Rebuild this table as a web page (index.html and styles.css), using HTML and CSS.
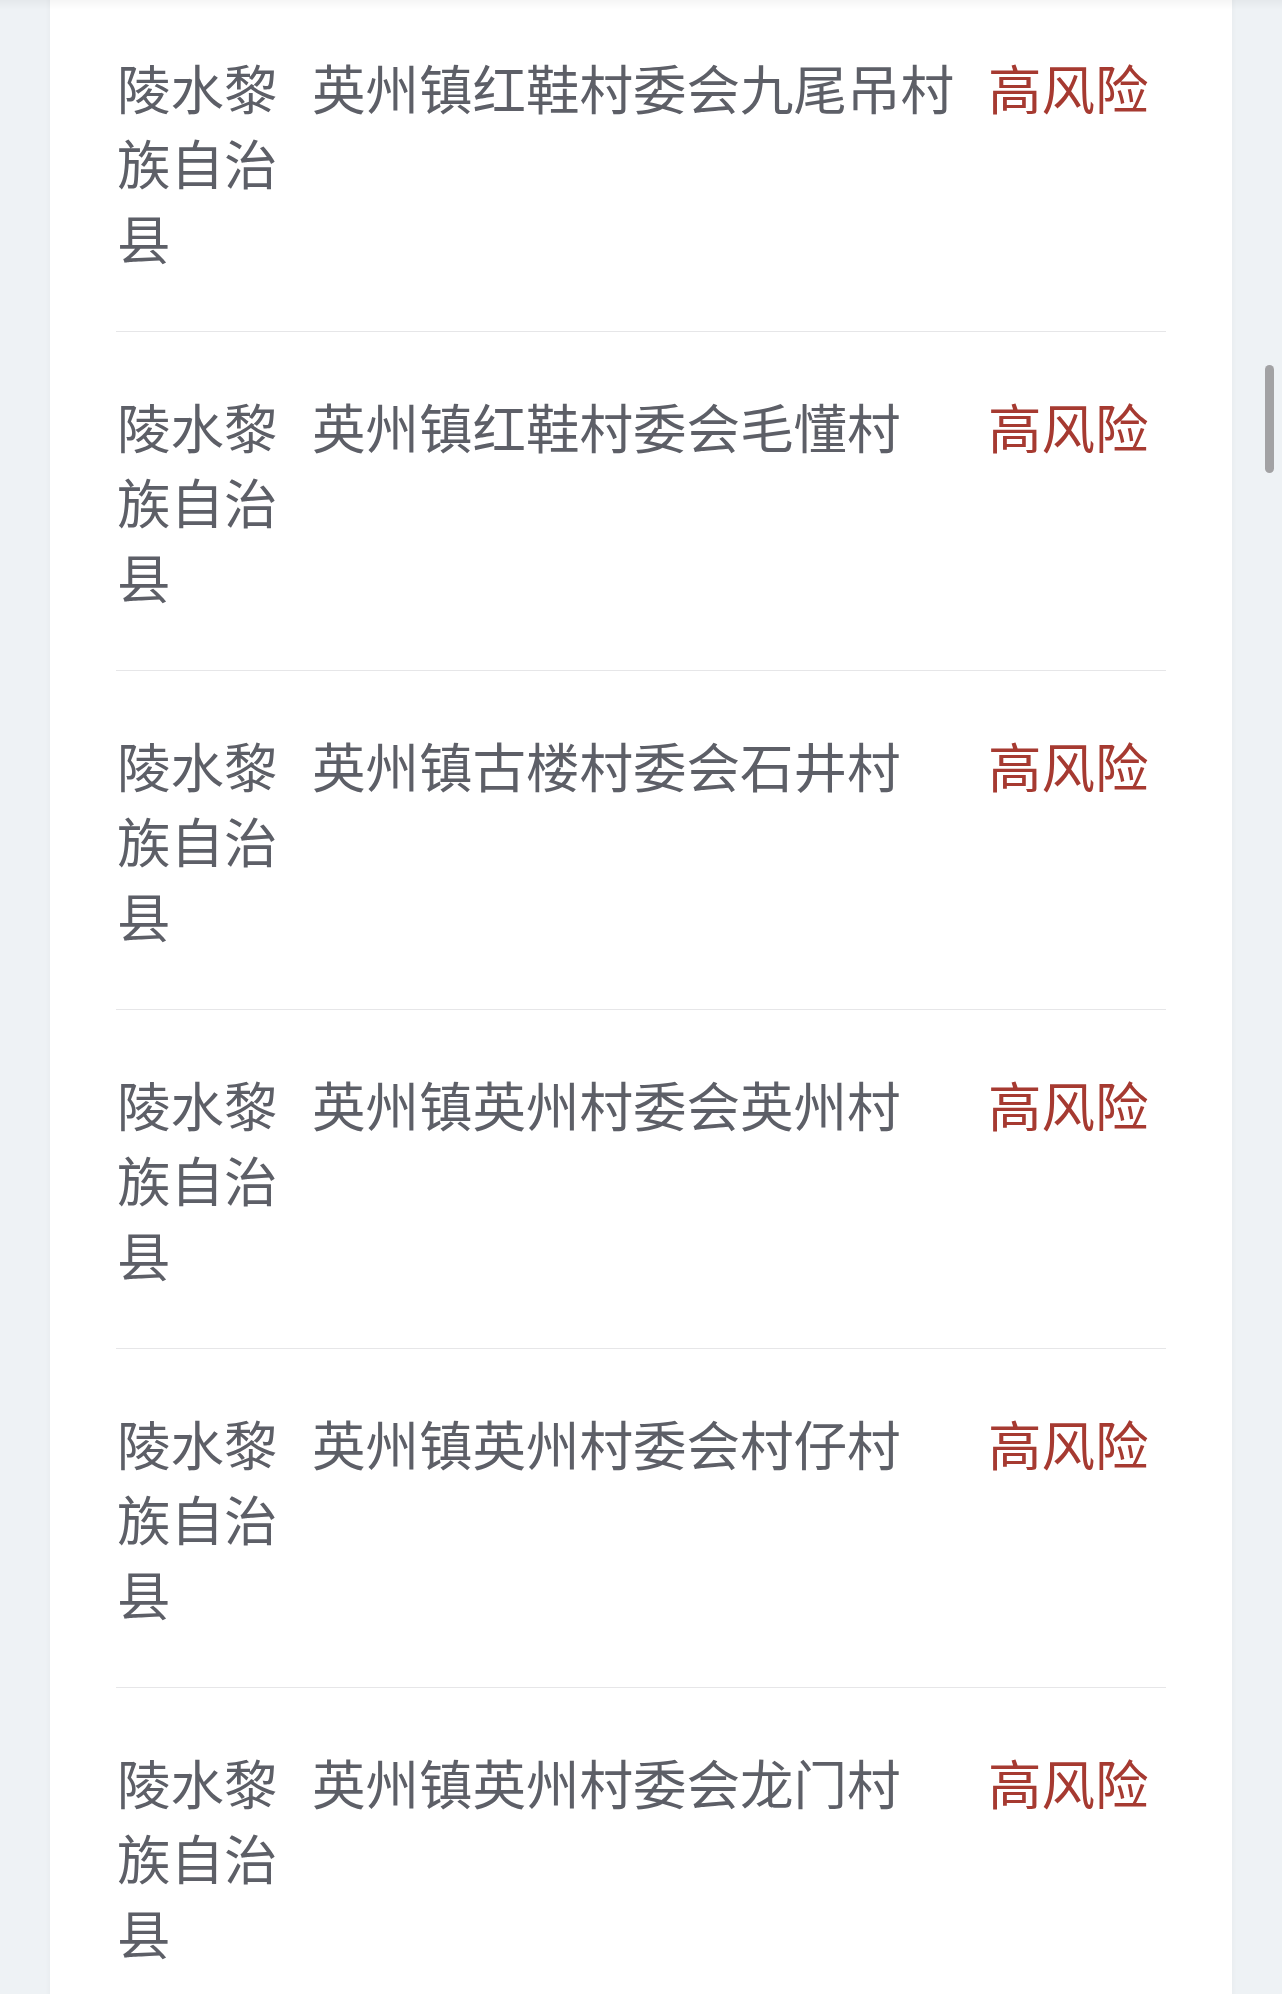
FILE: index.html
```html
<!DOCTYPE html>
<html lang="zh-CN">
<head>
<meta charset="utf-8">
<title>风险地区</title>
<link rel="stylesheet" href="styles.css">
</head>
<body>
<div class="top-shade"></div>
<main class="card">
  <ul class="list">
    <li class="row"><span class="county">陵水黎族自治县</span><span class="place">英州镇红鞋村委会九尾吊村</span><span class="level">高风险</span></li>
    <li class="row"><span class="county">陵水黎族自治县</span><span class="place">英州镇红鞋村委会毛懂村</span><span class="level">高风险</span></li>
    <li class="row"><span class="county">陵水黎族自治县</span><span class="place">英州镇古楼村委会石井村</span><span class="level">高风险</span></li>
    <li class="row"><span class="county">陵水黎族自治县</span><span class="place">英州镇英州村委会英州村</span><span class="level">高风险</span></li>
    <li class="row"><span class="county">陵水黎族自治县</span><span class="place">英州镇英州村委会村仔村</span><span class="level">高风险</span></li>
    <li class="row"><span class="county">陵水黎族自治县</span><span class="place">英州镇英州村委会龙门村</span><span class="level">高风险</span></li>
  </ul>
</main>
<div class="scroll-thumb"></div>
</body>
</html>
```
FILE: styles.css
```css
html, body {
  margin: 0;
  padding: 0;
  height: 1994px;
  overflow: hidden;
}
body {
  background: #eef2f5;
  font-family: "Noto Sans CJK SC", "Noto Sans", sans-serif;
}
.top-shade {
  position: fixed;
  left: 0;
  right: 0;
  top: 0;
  height: 10px;
  background: linear-gradient(to bottom, rgba(0,0,0,0.035), rgba(0,0,0,0));
  z-index: 2;
}
.card {
  margin: -7px 50px 0 50px;
  background: #ffffff;
  padding: 0 66px;
  box-shadow: 0 0 6px rgba(0,0,0,0.04);
}
.list {
  list-style: none;
  margin: 0;
  padding: 0;
}
.row {
  display: grid;
  grid-template-columns: 195px 676px 1fr;
  align-items: start;
  padding: 56px 0 57px 1px;
  border-bottom: 1px solid #e6e6e8;
  font-size: 53.5px;
  line-height: 75px;
  color: #5d5f67;
}
.county {
  width: 163px;
}
.level {
  color: #a63a31;
}
.scroll-thumb {
  position: fixed;
  left: 1265px;
  top: 365px;
  width: 9px;
  height: 108px;
  border-radius: 5px;
  background: #a2a2a4;
}
```
